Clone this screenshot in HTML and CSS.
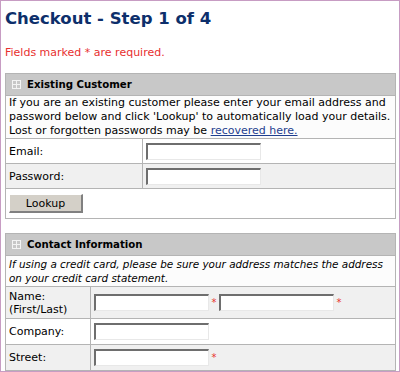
FILE: index.html
```html
<!DOCTYPE html>
<html>
<head>
<meta charset="utf-8">
<link rel="stylesheet" href="styles.css">
</head>
<body>
<div class="frame">
  <h1 class="title">Checkout - Step 1 of 4</h1>
  <p class="required">Fields marked * are required.</p>

  <table class="box">
    <tr><th colspan="2" class="head"><span class="icon"></span>Existing Customer</th></tr>
    <tr><td colspan="2" class="desc">If you are an existing customer please enter your email address and password below and click 'Lookup' to automatically load your details. Lost or forgotten passwords may be <a href="#">recovered here.</a></td></tr>
    <tr><td class="label l1">Email:</td><td class="field"><input class="inp" type="text"></td></tr>
    <tr class="alt"><td class="label l1">Password:</td><td class="field"><input class="inp" type="password"></td></tr>
    <tr><td colspan="2" class="btncell"><button class="btn">Lookup</button></td></tr>
  </table>

  <table class="box box2">
    <tr><th colspan="2" class="head"><span class="icon"></span>Contact Information</th></tr>
    <tr><td colspan="2" class="desc ital">If using a credit card, please be sure your address matches the address on your credit card statement.</td></tr>
    <tr class="alt"><td class="label l2 tall">Name:<br>(First/Last)</td><td class="field"><input class="inp"><span class="ast">*</span><input class="inp"><span class="ast">*</span></td></tr>
    <tr><td class="label l2">Company:</td><td class="field"><input class="inp"></td></tr>
    <tr class="alt"><td class="label l2">Street:</td><td class="field"><input class="inp"><span class="ast">*</span></td></tr>
  </table>
</div>
</body>
</html>
```

FILE: styles.css
```css
html, body { margin: 0; padding: 0; background: #fff; }
body { font-family: "DejaVu Sans", Verdana, sans-serif; font-size: 11px; color: #000; }
.frame {
  box-sizing: border-box;
  width: 400px; height: 372px;
  border: 1px solid #c79cc3;
  padding: 0 4px;
  overflow: hidden;
}
.title {
  margin: 7px 0 0 0;
  font-size: 16.5px; font-weight: bold; color: #0d2f6b; line-height: 22px;
}
.required { margin: 16px 0 0 0; color: #e8302f; font-size: 11px; line-height: 13px; }
.box {
  width: 391px; margin-top: 14px;
  border-collapse: collapse;
  border: 1px solid #a9a9a9;
}
.box2 { margin-top: 14px; }
.box td, .box th { border: 1px solid #b4b4b4; padding: 0; }
.head {
  background: #c8c8c8; text-align: left;
  height: 21px; padding: 0 0 0 6px !important;
  font-size: 10.2px; font-weight: bold;
}
.icon {
  display: inline-block; width: 7px; height: 7px;
  border: 1px solid #f4f4f4;
  margin-right: 6px; vertical-align: -1px;
  background:
    linear-gradient(#f4f4f4, #f4f4f4) center / 1px 100% no-repeat,
    linear-gradient(#f4f4f4, #f4f4f4) center / 100% 1px no-repeat;
}
.desc { padding: 0 3px !important; line-height: 14px; background: #fcfcfc; font-size: 11px; }
.ital { font-style: italic; font-size: 10.4px; padding: 1px 3px !important; }
.desc a { color: #1f3f8f; }
.label { padding: 0 0 0 3px !important; height: 24px; font-size: 11px; }
.l1 { width: 133px; }
.l2 { width: 81px; line-height: 13px; height: 25px; }
.tall { height: 31px; }
.alt td { background: #f0f0f0; }
.field { padding: 0 0 0 3px !important; white-space: nowrap; }
.inp {
  box-sizing: border-box; width: 115px; height: 17px;
  border-style: solid; border-width: 2px 1px 1px 2px;
  border-color: #6e6e6e #e8e8e8 #e8e8e8 #6e6e6e;
  background: #fff; margin: 0; vertical-align: middle; padding: 0;
}
.ast { color: #e8302f; font-size: 10px; display: inline-block; width: 10px; text-align: center; vertical-align: middle; line-height: 10px; }
.btncell { height: 29px; padding: 0 0 0 3px !important; }
.btn {
  width: 74px; height: 19px; padding: 0;
  font-family: "DejaVu Sans", sans-serif; font-size: 11px;
  background: #d4d0c8; color: #000;
  border-style: solid; border-width: 1px 2px 2px 1px;
  border-color: #fff #808080 #808080 #fff;
}
```
